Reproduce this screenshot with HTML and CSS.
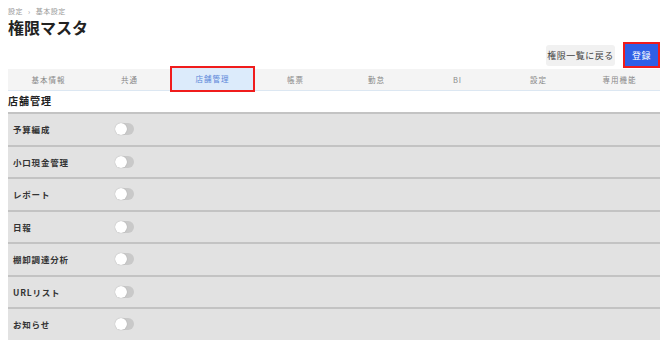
FILE: index.html
```html
<!DOCTYPE html>
<html lang="ja">
<head>
  <meta charset="UTF-8">
  <title>権限マスタ</title>
  <link rel="stylesheet" href="styles.css">
</head>
<body>
  <div class="page">
    <div class="breadcrumb">設定 <span class="sep">›</span> 基本設定</div>
    <h1>権限マスタ</h1>

    <div class="actions">
      <button class="btn-back">権限一覧に戻る</button>
      <button class="btn-save">登録</button>
    </div>

    <div class="tabs">
      <div class="tab">基本情報</div>
      <div class="tab">共通</div>
      <div class="tab active">店舗管理</div>
      <div class="tab">帳票</div>
      <div class="tab">勤怠</div>
      <div class="tab">BI</div>
      <div class="tab">設定</div>
      <div class="tab">専用機能</div>
    </div>

    <h2>店舗管理</h2>

    <div class="perm-list">
      <div class="perm-row"><span class="label">予算編成</span><span class="toggle"></span></div>
      <div class="perm-row"><span class="label">小口現金管理</span><span class="toggle"></span></div>
      <div class="perm-row"><span class="label">レポート</span><span class="toggle"></span></div>
      <div class="perm-row"><span class="label">日報</span><span class="toggle"></span></div>
      <div class="perm-row"><span class="label">棚卸調達分析</span><span class="toggle"></span></div>
      <div class="perm-row"><span class="label">URLリスト</span><span class="toggle"></span></div>
      <div class="perm-row"><span class="label">お知らせ</span><span class="toggle"></span></div>
    </div>
  </div>
</body>
</html>
```

FILE: styles.css
```css
body {
  margin: 0;
  background: #fff;
  font-family: "Noto Sans CJK JP", "Noto Sans", sans-serif;
  color: #222;
}
.page {
  padding: 6px 10px 0 8px;
}
.breadcrumb {
  font-size: 7px;
  line-height: 10px;
  color: #999;
  letter-spacing: 0.5px;
}
.breadcrumb .sep {
  margin: 0 3px;
}
h1 {
  margin: 0;
  font-size: 16px;
  line-height: 22px;
  font-weight: bold;
  color: #222;
}
.actions {
  display: flex;
  justify-content: flex-end;
  align-items: center;
  gap: 8px;
  margin-top: 4px;
  height: 26px;
}
.btn-back {
  font-family: inherit;
  font-size: 9px;
  letter-spacing: 0.5px;
  color: #444;
  background: #f1f1f1;
  border: none;
  border-radius: 3px;
  height: 21px;
  width: 69px;
  padding: 0;
}
.btn-save {
  font-family: inherit;
  font-size: 9px;
  letter-spacing: 0.5px;
  color: #fff;
  background: #2f5fe6;
  border: 2px solid #f01c1c;
  height: 26px;
  width: 37px;
  padding: 0;
}
.tabs {
  display: flex;
  margin-top: 1px;
  background: #f4f4f4;
  border-bottom: 1px solid #dce7f2;
  height: 21px;
}
.tab {
  flex: 1;
  font-size: 7.5px;
  letter-spacing: 1px;
  color: #888;
  text-align: center;
  line-height: 21px;
}
.tab.active {
  background: #dcebfb;
  color: #5b86d9;
  border: 2px solid #f01c1c;
  margin-top: -3px;
  height: 22px;
  line-height: 22px;
}
h2 {
  margin: 2px 0 0 0;
  font-size: 10px;
  line-height: 16px;
  font-weight: bold;
  color: #222;
  letter-spacing: 1px;
}
.perm-list {
  margin-top: 3px;
}
.perm-row {
  display: flex;
  align-items: center;
  height: 30.5px;
  background: #e2e2e2;
  border-top: 2px solid #c3c3c3;
  padding-left: 5px;
}
.label {
  width: 102px;
  font-size: 8.5px;
  letter-spacing: 0.8px;
  font-weight: bold;
  color: #333;
}
.toggle {
  position: relative;
  width: 19px;
  height: 12px;
  border-radius: 6px;
  background: #c9c9c9;
}
.toggle::after {
  content: "";
  position: absolute;
  left: 0;
  top: 0;
  width: 12px;
  height: 12px;
  border-radius: 50%;
  background: #fff;
  box-shadow: 0 0 1px rgba(0,0,0,0.3);
}
```
